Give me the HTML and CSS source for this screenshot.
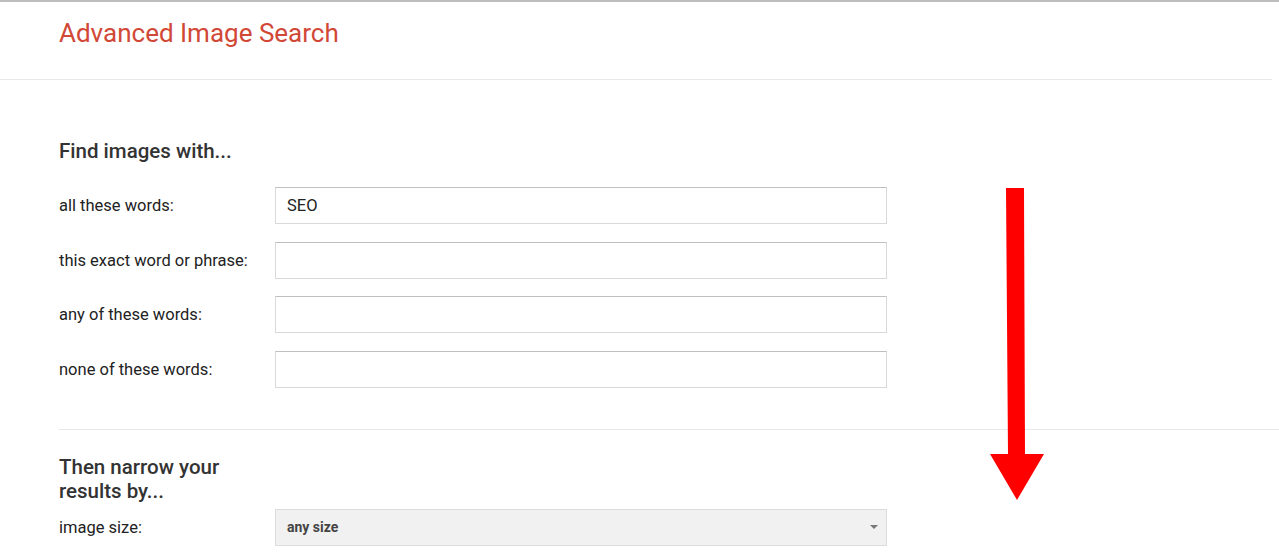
FILE: index.html
```html
<!DOCTYPE html>
<html lang="en">
<head>
  <meta charset="UTF-8" />
  <title>Advanced Image Search</title>
  <link rel="stylesheet" href="styles.css">
</head>
<body>
  <div class="header">
    <h1>Advanced Image Search</h1>
  </div>

  <div class="main">
    <div class="section">
      <h2>Find images with...</h2>
      <div class="row">
        <label>all these words:</label>
        <input type="text" value="SEO">
      </div>
      <div class="row">
        <label>this exact word or phrase:</label>
        <input type="text">
      </div>
      <div class="row">
        <label>any of these words:</label>
        <input type="text">
      </div>
      <div class="row">
        <label>none of these words:</label>
        <input type="text">
      </div>
    </div>

    <div class="section narrow">
      <h2>Then narrow your results by...</h2>
      <div class="row">
        <label>image size:</label>
        <div class="select">
          <span>any size</span>
          <span class="caret"></span>
        </div>
      </div>
    </div>
  </div>

  <svg class="arrow" width="60" height="320" viewBox="0 0 60 320">
    <polygon fill="#ff0000" points="16,0 34,0 35,266 54,266 27,312 0,266 18,266" />
  </svg>
</body>
</html>
```

FILE: styles.css
```css
body {
  font-family: Roboto, Arial, sans-serif;
  background: white;
  color: #222;
  margin: 0;
  border-top: 2px solid #bdbdbd;
  position: relative;
  height: 556px;
  overflow: hidden;
}
.header {
  height: 77px;
  border-bottom: 1px solid #e8e8e8;
  margin-right: 7px;
  padding-left: 59px;
}
h1 {
  margin: 0;
  padding-top: 16px;
  font-size: 26px;
  font-weight: normal;
  color: #d14836;
}
.main {
  padding-left: 59px;
}
.section {
  padding-top: 59px;
}
.section.narrow {
  border-top: 1px solid #e8e8e8;
  margin-top: 41px;
  padding-top: 25px;
}
h2 {
  margin: 0 0 24px 0;
  font-size: 20.5px;
  font-weight: 500;
  color: #333;
  width: 200px;
  line-height: 24px;
}
.narrow h2 {
  margin-bottom: 6px;
}
.row {
  display: flex;
  align-items: center;
  height: 37px;
  margin-bottom: 17.5px;
}
label {
  width: 216px;
  font-size: 16.5px;
  color: #222;
}
input {
  width: 612px;
  height: 37px;
  box-sizing: border-box;
  border: 1px solid #d9d9d9;
  border-top-color: #c0c0c0;
  padding: 0 11px;
  font-family: Roboto, Arial, sans-serif;
  font-size: 16.5px;
  color: #222;
  outline: none;
}
.select {
  width: 612px;
  height: 37px;
  box-sizing: border-box;
  border: 1px solid #dcdcdc;
  background: #f1f1f1;
  display: flex;
  align-items: center;
  justify-content: space-between;
  padding: 0 8px 0 11px;
  font-size: 14px;
  font-weight: bold;
  color: #444;
}
.caret {
  width: 0;
  height: 0;
  border-left: 4px solid transparent;
  border-right: 4px solid transparent;
  border-top: 4px solid #777;
}
.arrow {
  position: absolute;
  left: 990px;
  top: 186px;
}
```
